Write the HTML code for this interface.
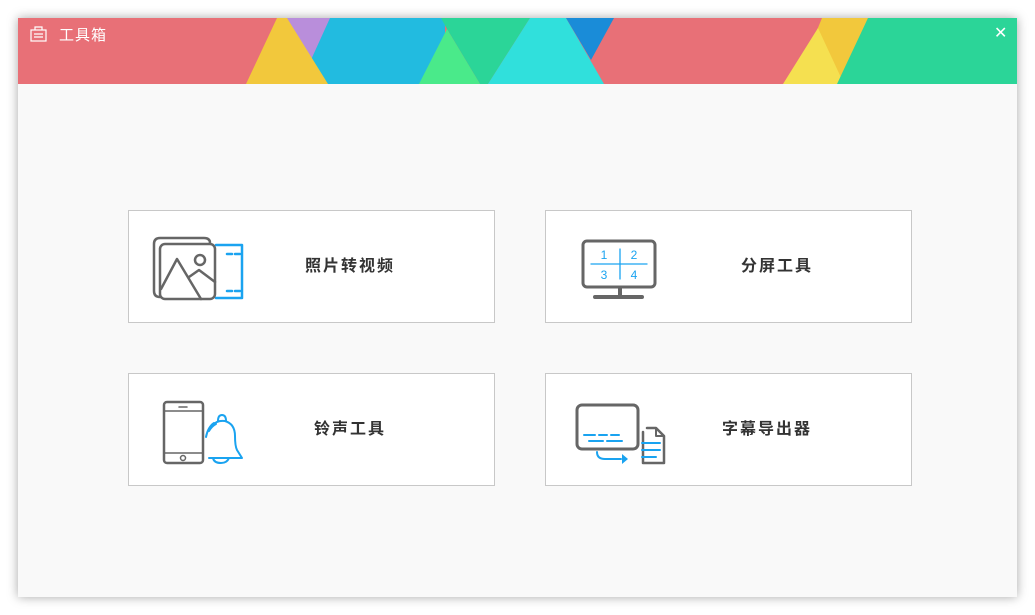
<!DOCTYPE html>
<html><head><meta charset="utf-8"><style>
html,body{margin:0;padding:0;width:1035px;height:615px;background:#fff;overflow:hidden;font-family:"Liberation Sans","Noto Sans CJK SC",sans-serif}
#win{position:absolute;left:18px;top:18px;width:999px;height:579px;background:#f9f9f9;box-shadow:0 0 10px rgba(0,0,0,.35)}
svg.hdr{position:absolute;left:0;top:0}
.title{position:absolute;left:59px;top:24px;color:#fff;font-size:15px;letter-spacing:1px}
.close{position:absolute;left:994px;top:24px;color:#fff;font-size:16px;line-height:20px}
.card{position:absolute;width:367px;height:113px;background:#fff;border:1px solid #c8c8c8;box-sizing:border-box}
.card span{position:absolute;top:46px;font-size:16px;color:#333;letter-spacing:2px;font-weight:bold;line-height:20px}
.card svg{position:absolute;left:0;top:0}
</style></head><body>
<div id="win"></div>
<svg class="hdr" width="1035" height="90">
<rect x="18" y="18" width="999" height="66" fill="#e87077"/>
<polygon points="287,18 330,18 310,84 287,84" fill="#b98edb"/>
<polygon points="330,18 445,18 445,84 300,84" fill="#22bbe0"/>
<polygon points="441,18 530,18 488,84 480,84 447,29" fill="#2bd598"/>
<polygon points="447,29 480,84 419,84" fill="#4aea8a"/>
<polygon points="277,18 287,18 328,84 246,84" fill="#f2c83c"/>
<polygon points="530,18 566,18 604,84 488,84" fill="#30e0dc"/>
<polygon points="566,18 614,18 591,60" fill="#1a8cd8"/>
<polygon points="822,18 868,18 840,84 795,84" fill="#f2c83c"/>
<polygon points="818,28 844,84 783,84" fill="#f5e050"/>
<polygon points="868,18 1017,18 1017,84 837,84" fill="#2bd598"/>
<g fill="none" stroke="#fff" stroke-width="1.2">
<rect x="31" y="30" width="15" height="11"/><path d="M35 30v-3h7v3M34 34h9M34 37h9"/>
</g>
</svg>
<div class="title">工具箱</div>
<div class="close">✕</div>

<div class="card" style="left:128px;top:210px"><span style="left:176px">照片转视频</span>
<svg width="130" height="111"><g fill="none" stroke-width="2.5" stroke-linecap="round" stroke-linejoin="round">
<path d="M87 34h26v53H87" stroke="#1aa3f0"/>
<path d="M98 43h5M106 43h5M98 80h5M106 80h5" stroke="#1aa3f0"/>
<path d="M31 86q-6 0-6-6V33q0-6 6-6h44q6 0 6 5" stroke="#666"/>
<rect x="31" y="33" width="55" height="55" rx="5" fill="#fff" stroke="#666"/>
<path d="M32 78l16-30 24 40M60 66l10-7 16 12" stroke="#666"/>
<circle cx="71" cy="49" r="5" stroke="#666"/>
</g></svg></div>

<div class="card" style="left:545px;top:210px"><span style="left:195px">分屏工具</span>
<svg width="130" height="111"><g fill="none" stroke-linecap="round">
<rect x="37" y="30" width="72" height="46" rx="4" stroke="#666" stroke-width="3"/>
<path d="M74 77v8M49 86h47" stroke="#666" stroke-width="4"/>
<path d="M45 53h56M74 38v30" stroke="#1aa3f0" stroke-width="1.3"/></g>
<g fill="#1aa3f0" font-size="12" font-family="Liberation Sans,sans-serif" text-anchor="middle">
<text x="58" y="48">1</text><text x="88" y="48">2</text><text x="58" y="68">3</text><text x="88" y="68">4</text></g></svg></div>

<div class="card" style="left:128px;top:373px"><span style="left:185px">铃声工具</span>
<svg width="130" height="111"><g fill="none" stroke-width="2.5" stroke-linecap="round" stroke-linejoin="round">
<rect x="35" y="28" width="39" height="61" rx="3" stroke="#666"/>
<path d="M36 37h37M36 79h37M50 33h8" stroke="#666" stroke-width="1.5"/>
<circle cx="54" cy="84" r="2.5" stroke="#666" stroke-width="1.5"/>
<path d="M80 84h33l-5-8q-2-4-2-14q0-12-10-15q-8-1-12 4M80 57q3-5 7-7M77 63q2-10 8-14M89 47q0-6 4-6q4 0 4 6M84 84q1 5 8 5q6 0 8-5" stroke="#1aa3f0" stroke-width="2"/>
</g></svg></div>

<div class="card" style="left:545px;top:373px"><span style="left:176px">字幕导出器</span>
<svg width="130" height="111"><g fill="none" stroke-linecap="round" stroke-linejoin="round">
<path d="M97 58v31h21V62l-8-8H101" stroke="#666" stroke-width="2.5"/>
<path d="M110 54v8h8" stroke="#666" stroke-width="2"/>
<rect x="31" y="31" width="61" height="44" rx="5" fill="#fff" stroke="#666" stroke-width="3"/>
<path d="M38 61h11M53 61h8M65 61h8M43 67h14M61 67h15M96 69h18M96 76h18M96 83h14M51 78q0 7 8 7h16" stroke="#1aa3f0" stroke-width="2"/>
<polygon points="76,80 82,85 76,90" fill="#1aa3f0"/>
</g></svg></div>
</body></html>
